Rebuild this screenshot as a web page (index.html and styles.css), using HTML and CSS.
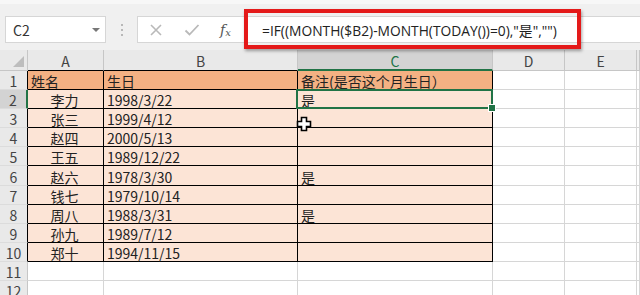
FILE: index.html
```html
<!DOCTYPE html>
<html lang="zh-CN">

<head>
	<meta charset="utf-8">
	<title>生日提醒</title>
	<link rel="stylesheet" href="styles.css">
</head>

<body>
	<div class="formula-area">
		<div class="namebox">C2<span class="caret"></span></div>
		<div class="grip"><i></i><i></i><i></i></div>
		<div class="fbar">
			<div class="fbtns">
				<svg width="14" height="14" viewBox="0 0 14 14"><path d="M2 2 L12 12 M12 2 L2 12" stroke="#b9b9b9" stroke-width="1.6" fill="none" /></svg>
				<svg width="16" height="14" viewBox="0 0 16 14"><path d="M1.5 7.5 L5.5 11.5 L14.5 2" stroke="#b9b9b9" stroke-width="1.8" fill="none" /></svg>
				<span class="fx">f<sub>x</sub></span>
			</div>
			<div class="ftext">=IF((MONTH($B2)-MONTH(TODAY())=0),"是","")</div>
		</div>
	</div>

	<div class="sheet">
		<!-- column headers -->
		<div class="corner"><span></span></div>
		<div class="ch edge">A</div>
		<div class="ch edge">B</div>
		<div class="ch sel">C</div>
		<div class="ch">D</div>
		<div class="ch">E</div>
		<div class="ch"></div>

		<div class="rh edge">1</div>
		<div class="d head">姓名</div>
		<div class="d head">生日</div>
		<div class="d head">备注(是否这个月生日）</div>
		<div class="c"></div><div class="c"></div><div class="c"></div>

		<div class="rh edge sel">2</div>
		<div class="d name">李力</div>
		<div class="d">1998/3/22</div>
		<div class="d active">是<span class="handle"></span></div>
		<div class="c"></div><div class="c"></div><div class="c"></div>

		<div class="rh edge">3</div>
		<div class="d name">张三</div>
		<div class="d">1999/4/12</div>
		<div class="d"></div>
		<div class="c"></div><div class="c"></div><div class="c"></div>

		<div class="rh edge">4</div>
		<div class="d name">赵四</div>
		<div class="d">2000/5/13</div>
		<div class="d"></div>
		<div class="c"></div><div class="c"></div><div class="c"></div>

		<div class="rh edge">5</div>
		<div class="d name">王五</div>
		<div class="d">1989/12/22</div>
		<div class="d"></div>
		<div class="c"></div><div class="c"></div><div class="c"></div>

		<div class="rh edge">6</div>
		<div class="d name">赵六</div>
		<div class="d">1978/3/30</div>
		<div class="d">是</div>
		<div class="c"></div><div class="c"></div><div class="c"></div>

		<div class="rh edge">7</div>
		<div class="d name">钱七</div>
		<div class="d">1979/10/14</div>
		<div class="d"></div>
		<div class="c"></div><div class="c"></div><div class="c"></div>

		<div class="rh edge">8</div>
		<div class="d name">周八</div>
		<div class="d">1988/3/31</div>
		<div class="d">是</div>
		<div class="c"></div><div class="c"></div><div class="c"></div>

		<div class="rh edge">9</div>
		<div class="d name">孙九</div>
		<div class="d">1989/7/12</div>
		<div class="d"></div>
		<div class="c"></div><div class="c"></div><div class="c"></div>

		<div class="rh edge">10</div>
		<div class="d name">郑十</div>
		<div class="d">1994/11/15</div>
		<div class="d"></div>
		<div class="c"></div><div class="c"></div><div class="c"></div>

		<div class="rh">11</div>
		<div class="c"></div><div class="c"></div><div class="c"></div>
		<div class="c"></div><div class="c"></div><div class="c"></div>

		<div class="rh">12</div>
		<div class="c"></div><div class="c"></div><div class="c"></div>
		<div class="c"></div><div class="c"></div><div class="c"></div>
	</div>

	<svg class="cursor" width="16" height="16" viewBox="0 0 16 16">
		<path d="M5.5 1.5 H10.5 V5.5 H14.5 V10.5 H10.5 V14.5 H5.5 V10.5 H1.5 V5.5 H5.5 Z" fill="#fff" stroke="#000" stroke-width="1.6" />
	</svg>
</body>

</html>
```

FILE: styles.css
```css
body {
	margin: 0;
	width: 640px;
	height: 295px;
	overflow: hidden;
	position: relative;
	background: #fff;
	font-family: "Noto Sans CJK SC", "Noto Sans", sans-serif;
	color: #222;
}

.formula-area {
	height: 50px;
	box-sizing: border-box;
	padding-top: 12px;
	padding-left: 5px;
	display: flex;
	align-items: flex-start;
	background: #f0f0f0;
	border-top: 4px solid #f7f7f7;
}

.namebox {
	width: 101px;
	height: 27px;
	box-sizing: border-box;
	background: #fff;
	border: 1px solid #d6d6d6;
	display: flex;
	align-items: center;
	padding-left: 7px;
	font-size: 14px;
	color: #333;
	position: relative;
}

.caret {
	position: absolute;
	right: 5px;
	top: 11px;
	border-left: 4px solid transparent;
	border-right: 4px solid transparent;
	border-top: 4px solid #777;
}

.grip {
	width: 31px;
	height: 27px;
	display: flex;
	flex-direction: column;
	align-items: center;
	justify-content: center;
	gap: 3px;
}

.grip i {
	width: 2px;
	height: 2px;
	background: #b8b8b8;
}

.fbar {
	flex: 1;
	height: 27px;
	box-sizing: border-box;
	background: #fff;
	border: 1px solid #d6d6d6;
	border-right: 0;
	display: flex;
	align-items: center;
}

.fbtns {
	width: 106px;
	display: flex;
	align-items: center;
	padding-left: 11px;
	box-sizing: border-box;
	gap: 21px;
}

.fx {
	font-family: "DejaVu Serif", "Liberation Serif", serif;
	font-style: italic;
	font-size: 14px;
	color: #555;
	margin-left: -1px;
}

.fx sub {
	font-size: 10px;
	vertical-align: -1px;
}

.ftext {
	position: relative;
	padding-left: 18px;
	font-size: 13.8px;
	color: #222;
	white-space: nowrap;
	font-family: "Open Sans", "Noto Sans CJK SC", sans-serif;
}

/* red highlight around the formula */
.ftext::before {
	content: "";
	position: absolute;
	left: 0;
	top: -11px;
	width: 337px;
	height: 40px;
	box-sizing: border-box;
	border: 4px solid #e41a1a;
	box-shadow: 1px 2px 3px rgba(0, 0, 0, 0.35);
}

.sheet {
	display: grid;
	grid-template-columns: 28px 76px 194px 195px 72px 72px 1fr;
	grid-template-rows: 21px;
	grid-auto-rows: 19.1px;
	font-size: 14px;
}

.sheet > div {
	box-sizing: border-box;
	border-right: 1px solid #d6d6d6;
	border-bottom: 1px solid #d6d6d6;
	display: flex;
	align-items: center;
	white-space: nowrap;
	line-height: 1;
}

.corner,
.ch,
.rh {
	background: #e9e9e9;
	color: #444;
	justify-content: center;
}

.sheet > .corner {
	border-right-color: #c6c6c6;
	border-bottom-color: #c6c6c6;
	position: relative;
}

.corner span {
	position: absolute;
	right: 3px;
	bottom: 3px;
	border-left: 11px solid transparent;
	border-bottom: 11px solid #bdbdbd;
}

.sheet > .ch {
	border-right-color: #c6c6c6;
	border-bottom-color: #c6c6c6;
	padding-top: 2px;
}

.sheet > .ch.edge {
	border-bottom-color: #000;
}

.sheet > .ch.sel {
	background: #d3d3d3;
	color: #217346;
	border-bottom: 2px solid #217346;
}

.sheet > .rh {
	border-right-color: #c6c6c6;
	border-bottom-color: #dcdcdc;
	padding-top: 2px;
}

.sheet > .rh.edge {
	border-right-color: #000;
}

.sheet > .rh.sel {
	background: #d3d3d3;
	border-right: 2px solid #217346;
}

.sheet > .d {
	background: #fce4d6;
	border-right-color: #000;
	border-bottom-color: #000;
	padding-left: 3px;
	padding-top: 2px;
}

.sheet > .d.head {
	background: #f4b183;
}

.sheet > .d.name {
	justify-content: center;
	padding-left: 0;
	padding-right: 2px;
}

.sheet > .d.active {
	position: relative;
}

/* selected cell outline */
.active::after {
	content: "";
	position: absolute;
	left: -2px;
	top: -1px;
	right: -1px;
	bottom: -1px;
	border: 2px solid #217346;
}

.handle {
	position: absolute;
	right: -4px;
	bottom: -4px;
	width: 6px;
	height: 6px;
	background: #217346;
	border: 1px solid #fff;
	z-index: 1;
}

.cursor {
	position: absolute;
	left: 296px;
	top: 116px;
}
```
